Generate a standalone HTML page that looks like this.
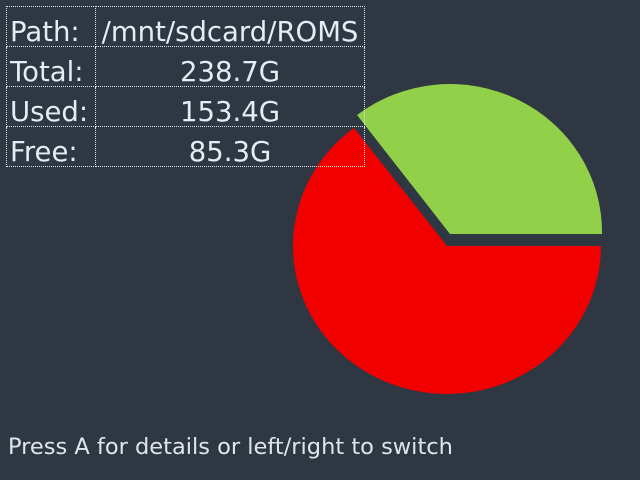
<!DOCTYPE html>
<html><head><meta charset="utf-8"><style>
html,body{margin:0;padding:0;background:#2e3742;width:640px;height:480px;overflow:hidden}
body{position:relative;font-family:"DejaVu Sans","Liberation Sans",sans-serif;color:#e2eef4}
table{position:absolute;left:6px;top:6px;border-collapse:collapse;z-index:2;table-layout:fixed}
td{border:1px dotted #dde6ec;height:39px;padding:0;font-size:27.5px;line-height:39px;white-space:nowrap;overflow:visible;vertical-align:bottom}
td span{position:relative;top:6px}
td.l{width:85px;text-align:left;padding-left:3px}
td.v{width:268px;text-align:center}
.foot{position:absolute;left:8px;top:434px;font-size:22.5px;color:#dfe6ea}
svg{position:absolute;left:0;top:0;z-index:1}
</style></head><body>
<svg width="640" height="480">
<path d="M447,246 L601,246 A154,148 0 1 1 354,128 Z" fill="#f20000"/>
<path d="M450,234 L357,115 A152,148 0 0 1 602,234 Z" fill="#92d04a"/>
</svg>
<table>
<tr><td class="l"><span>Path:</span></td><td class="v"><span>/mnt/sdcard/ROMS</span></td></tr>
<tr><td class="l"><span>Total:</span></td><td class="v"><span>238.7G</span></td></tr>
<tr><td class="l"><span>Used:</span></td><td class="v"><span>153.4G</span></td></tr>
<tr><td class="l"><span>Free:</span></td><td class="v"><span>85.3G</span></td></tr>
</table>
<div class="foot">Press A for details or left/right to switch</div>
</body></html>
